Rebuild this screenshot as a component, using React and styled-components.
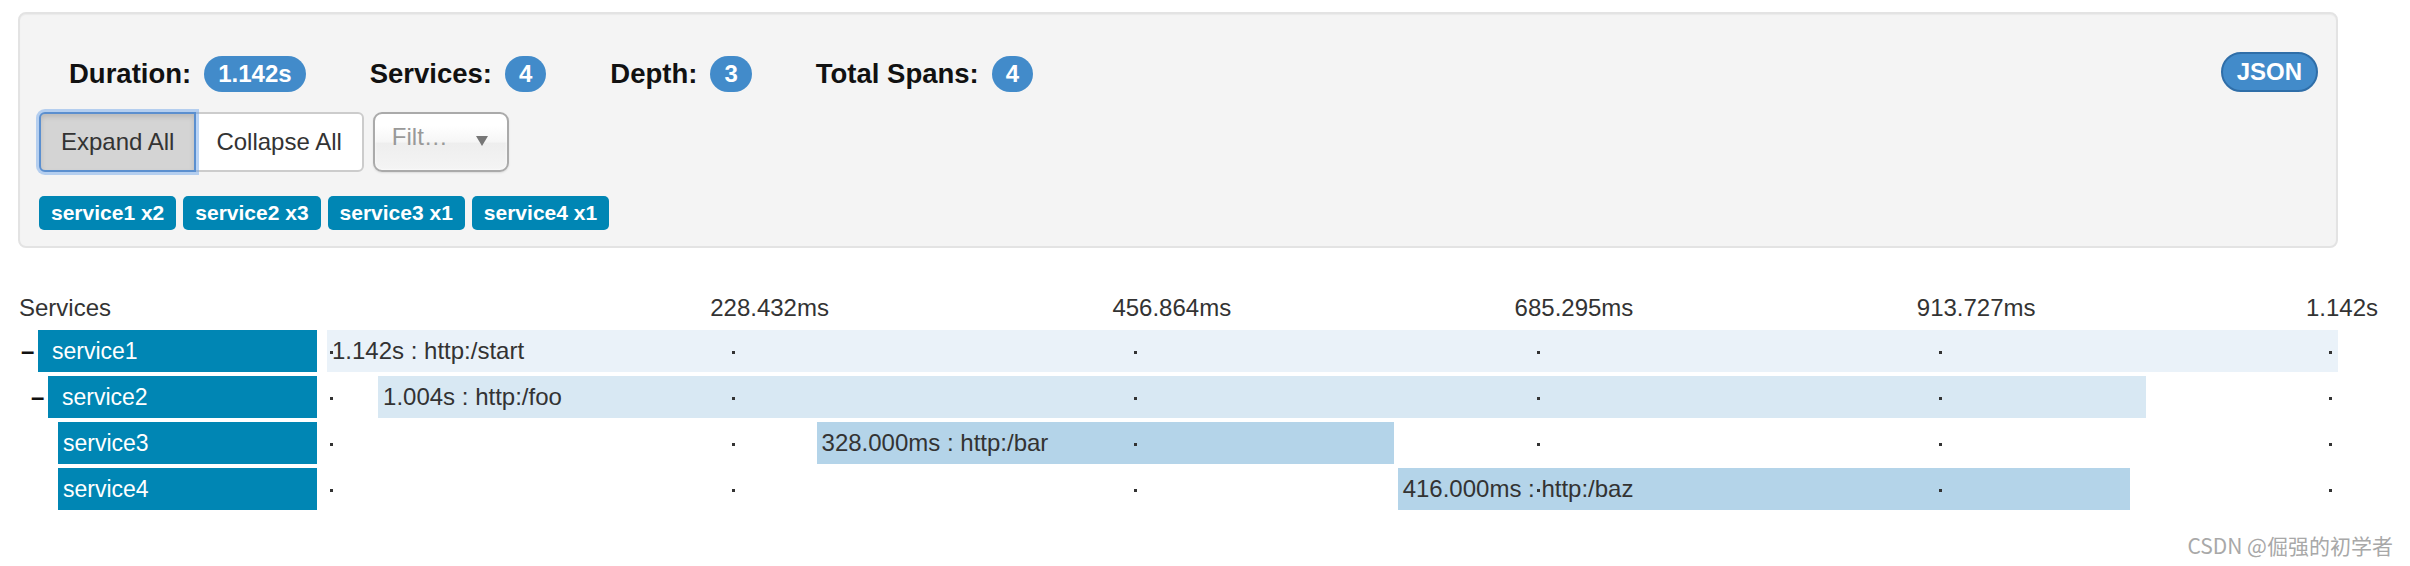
import React from 'react';
import styled, { createGlobalStyle } from 'styled-components';

const GlobalStyle = createGlobalStyle`
  body {
    margin: 0;
    background: #fff;
    font-family: "Liberation Sans", Arial, sans-serif;
    color: #333;
  }
`

const TOTAL = 1142

const spans = [
  { service: 'service1', depth: 0, start: 0, duration: 1142, label: '1.142s : http:/start', expandable: true },
  { service: 'service2', depth: 1, start: 29, duration: 1004, label: '1.004s : http:/foo', expandable: true },
  { service: 'service3', depth: 2, start: 278, duration: 328, label: '328.000ms : http:/bar' },
  { service: 'service4', depth: 2, start: 608, duration: 416, label: '416.000ms : http:/baz' },
]

const ticks = ['228.432ms', '456.864ms', '685.295ms', '913.727ms']

const barColors = ['#eaf2f9', '#d8e8f3', '#b4d4e9']

const Page = styled.div`
  position: relative;
  width: 2410px;
  height: 566px;
  padding: 12px 0 0 18px;
  box-sizing: border-box;
  overflow: hidden;
`

const Content = styled.div`
  width: 2320px;
`

const SummaryWell = styled.div`
  height: 236px;
  box-sizing: border-box;
  padding: 38px 18px 0 19px;
  background: #f4f4f4;
  border: 2px solid #e3e3e3;
  border-radius: 8px;
  box-shadow: inset 0 1px 1px rgba(0, 0, 0, 0.04);
`

const SummaryRow = styled.div`
  display: flex;
  align-items: center;
  height: 40px;
`

const SummaryItems = styled.div`
  display: flex;
  align-items: center;
  gap: 64px;
  margin-left: 30px;
  margin-top: 3px;
`

const SummaryItem = styled.div`
  display: flex;
  align-items: center;
  gap: 13px;
`

const SummaryLabel = styled.span`
  font-size: 27.5px;
  font-weight: 700;
  color: #111;
`

const Badge = styled.span`
  display: inline-block;
  height: 36px;
  line-height: 36px;
  padding: 0 14px;
  border-radius: 18px;
  background: #428bca;
  color: #fff;
  font-size: 24px;
  font-weight: 700;
`

const JsonButton = styled.button`
  margin-left: auto;
  height: 40px;
  padding: 0 14px;
  border: 2px solid #2f6ea8;
  border-radius: 20px;
  background: #428bca;
  color: #fff;
  font-family: inherit;
  font-size: 24px;
  font-weight: 700;
`

const ButtonRow = styled.div`
  display: flex;
  gap: 9px;
  margin-top: 20px;
  height: 60px;
`

const ButtonGroup = styled.div`
  display: flex;
`

const GroupButton = styled.button`
  position: relative;
  height: 60px;
  padding: 0 20px;
  font-family: inherit;
  font-size: 24px;
  color: #333;
  background: ${p => (p.$active ? '#d4d4d4' : '#fff')};
  border: 2px solid ${p => (p.$active ? '#5b8fcf' : '#ccc')};
  border-radius: ${p => (p.$first ? '6px 0 0 6px' : '0 6px 6px 0')};
  margin-left: ${p => (p.$first ? '0' : '-2px')};
  z-index: ${p => (p.$active ? 1 : 0)};
  box-shadow: ${p =>
    p.$active
      ? 'inset 0 3px 5px rgba(0,0,0,0.12), 0 0 0 3px rgba(102,160,233,0.45)'
      : 'none'};
`

const FilterSelect = styled.div`
  display: flex;
  align-items: flex-start;
  width: 136px;
  height: 60px;
  box-sizing: border-box;
  padding: 5px 19px 0 17px;
  border: 2px solid #aaa;
  border-radius: 9px;
  background: linear-gradient(#fff 20%, #f6f6f6 50%, #eee 52%, #f4f4f4 100%);
  box-shadow: inset 0 0 3px #fff, 0 1px 2px rgba(0, 0, 0, 0.1);
`

const FilterText = styled.span`
  font-size: 24px;
  line-height: 36px;
  color: #999;
`

const Caret = styled.svg`
  margin-left: auto;
  margin-top: 17px;
`

const ServiceTags = styled.div`
  display: flex;
  gap: 7px;
  margin-top: 24px;
`

const ServiceTag = styled.span`
  height: 34px;
  line-height: 34px;
  padding: 0 12px;
  border-radius: 5px;
  background: #0086b4;
  color: #fff;
  font-size: 21px;
  font-weight: 700;
`

const TimelineHeader = styled.div`
  display: grid;
  grid-template-columns: 299px 1fr;
  column-gap: 10px;
  height: 30px;
  margin-top: 45px;
  margin-bottom: 7px;
  font-size: 24px;
  line-height: 30px;
  color: #333;
`

const HeaderTitle = styled.span`
  padding-left: 1px;
`

const Axis = styled.div`
  position: relative;
`

const TickLabel = styled.span`
  position: absolute;
  top: 0;
  white-space: nowrap;
`

const Rows = styled.div`
  display: flex;
  flex-direction: column;
  gap: 4px;
`

const Row = styled.div`
  display: grid;
  grid-template-columns: 299px 1fr;
  column-gap: 10px;
  height: 42px;
`

const ServiceCell = styled.div`
  display: flex;
  align-items: center;
  padding-left: ${p => p.$depth * 10}px;
`

const Expander = styled.span`
  flex: none;
  width: 20px;
  box-sizing: border-box;
  padding-left: 3px;
  font-size: 24px;
  font-weight: 700;
  color: #111;
`

const ServiceName = styled.div`
  flex: 1;
  height: 42px;
  line-height: 42px;
  padding-left: ${p => (p.$leaf ? 5 : 14)}px;
  background: #0086b4;
  color: #fff;
  font-size: 23px;
`

const Track = styled.div`
  position: relative;
  height: 42px;
`

const Bar = styled.div`
  position: absolute;
  top: 0;
  bottom: 0;
  padding-left: 5px;
  box-sizing: border-box;
  background: ${p => barColors[p.$depth]};
  font-size: 24px;
  line-height: 42px;
  color: #333;
  white-space: nowrap;
`

const Dot = styled.span`
  position: absolute;
  top: 21px;
  width: 3px;
  height: 3px;
  background: #333;
`

const Watermark = styled.div`
  position: absolute;
  right: 17px;
  bottom: 6px;
  font-family: "Noto Sans CJK SC", "Liberation Sans", sans-serif;
  font-size: 21px;
  color: #a8a8a8;
`

function TrackDots() {
  return (
    <>
      {[0, 20, 40, 60, 80].map(p => (
        <Dot key={p} style={{ left: `calc(${p}% + 3px)` }} />
      ))}
      <Dot style={{ right: '6px' }} />
    </>
  )
}

function App() {
  return (
    <Page>
      <GlobalStyle />
      <Content>
        <SummaryWell>
          <SummaryRow>
            <SummaryItems>
              <SummaryItem>
                <SummaryLabel>Duration:</SummaryLabel>
                <Badge>1.142s</Badge>
              </SummaryItem>
              <SummaryItem>
                <SummaryLabel>Services:</SummaryLabel>
                <Badge>4</Badge>
              </SummaryItem>
              <SummaryItem>
                <SummaryLabel>Depth:</SummaryLabel>
                <Badge>3</Badge>
              </SummaryItem>
              <SummaryItem>
                <SummaryLabel>Total Spans:</SummaryLabel>
                <Badge>4</Badge>
              </SummaryItem>
            </SummaryItems>
            <JsonButton>JSON</JsonButton>
          </SummaryRow>

          <ButtonRow>
            <ButtonGroup>
              <GroupButton $first $active>Expand All</GroupButton>
              <GroupButton>Collapse All</GroupButton>
            </ButtonGroup>
            <FilterSelect>
              <FilterText>Filt…</FilterText>
              <Caret width="12" height="10" viewBox="0 0 12 10">
                <polygon points="0,0 12,0 6,10" fill="#777" />
              </Caret>
            </FilterSelect>
          </ButtonRow>

          <ServiceTags>
            <ServiceTag>service1 x2</ServiceTag>
            <ServiceTag>service2 x3</ServiceTag>
            <ServiceTag>service3 x1</ServiceTag>
            <ServiceTag>service4 x1</ServiceTag>
          </ServiceTags>
        </SummaryWell>

        <TimelineHeader>
          <HeaderTitle>Services</HeaderTitle>
          <Axis>
            {ticks.map((t, i) => (
              <TickLabel key={t} style={{ left: `calc(${(i + 1) * 20}% - 19px)` }}>
                {t}
              </TickLabel>
            ))}
            <TickLabel style={{ right: '-40px' }}>1.142s</TickLabel>
          </Axis>
        </TimelineHeader>

        <Rows>
          {spans.map(s => (
            <Row key={s.service}>
              <ServiceCell $depth={s.depth}>
                <Expander>{s.expandable ? '–' : ''}</Expander>
                <ServiceName $leaf={!s.expandable}>{s.service}</ServiceName>
              </ServiceCell>
              <Track>
                <Bar
                  $depth={s.depth}
                  style={{
                    left: `${(s.start / TOTAL) * 100}%`,
                    width: `${(s.duration / TOTAL) * 100}%`,
                  }}
                >
                  {s.label}
                </Bar>
                <TrackDots />
              </Track>
            </Row>
          ))}
        </Rows>
      </Content>
      <Watermark>CSDN @倔强的初学者</Watermark>
    </Page>
  )
}

export default App
